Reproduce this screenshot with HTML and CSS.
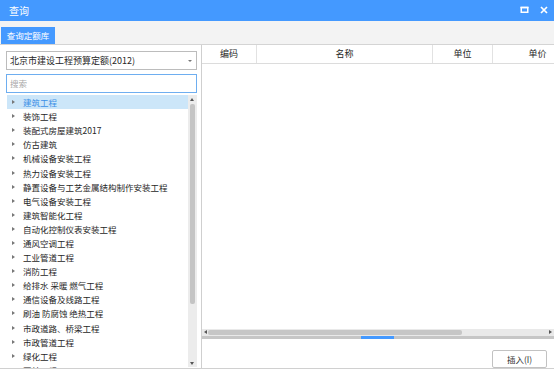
FILE: index.html
```html
<!DOCTYPE html>
<html lang="zh-CN">
<head>
    <meta charset="UTF-8">
    <title>查询</title>
    <link rel="stylesheet" href="styles.css">
</head>
<body>
    <div class="window">
        <div class="titlebar">
            <span class="title">查询</span>
            <span class="win-btns">
                <svg width="9" height="8" viewBox="0 0 9 8"><rect x="1.25" y="1.5" width="6.5" height="4.75" fill="none" stroke="#fff" stroke-width="1.5"/><rect x="0.5" y="0.75" width="8" height="1.5" fill="#fff"/></svg>
                <svg width="8" height="8" viewBox="0 0 8 8"><path d="M1 1 L7 7 M7 1 L1 7" stroke="#fff" stroke-width="1.7"/></svg>
            </span>
        </div>

        <div class="tabbar">
            <div class="tab">查询定额库</div>
        </div>

        <div class="main">
            <div class="left">
                <div class="combo">
                    <span>北京市建设工程预算定额(2012)</span>
                    <span class="combo-arrow"></span>
                </div>
                <div class="search">搜索</div>
                <div class="tree-wrap">
                    <ul class="tree">
                        <li class="selected"><i></i>建筑工程</li>
                        <li><i></i>装饰工程</li>
                        <li><i></i>装配式房屋建筑2017</li>
                        <li><i></i>仿古建筑</li>
                        <li><i></i>机械设备安装工程</li>
                        <li><i></i>热力设备安装工程</li>
                        <li><i></i>静置设备与工艺金属结构制作安装工程</li>
                        <li><i></i>电气设备安装工程</li>
                        <li><i></i>建筑智能化工程</li>
                        <li><i></i>自动化控制仪表安装工程</li>
                        <li><i></i>通风空调工程</li>
                        <li><i></i>工业管道工程</li>
                        <li><i></i>消防工程</li>
                        <li><i></i>给排水 采暖 燃气工程</li>
                        <li><i></i>通信设备及线路工程</li>
                        <li><i></i>刷油 防腐蚀 绝热工程</li>
                        <li><i></i>市政道路、桥梁工程</li>
                        <li><i></i>市政管道工程</li>
                        <li><i></i>绿化工程</li>
                        <li><i></i>园林工程</li>
                    </ul>
                    <div class="vscroll">
                        <span class="arr-up"></span>
                        <span class="vthumb"></span>
                        <span class="arr-down"></span>
                    </div>
                </div>
            </div>

            <div class="right">
                <div class="grid-head">
                    <div class="col c-code">编码</div>
                    <div class="col c-name">名称</div>
                    <div class="col c-unit">单位</div>
                    <div class="col c-price">单价</div>
                </div>
                <div class="grid-body"></div>
                <div class="hscroll">
                    <span class="arr-left"></span>
                    <span class="hthumb"></span>
                    <span class="arr-right"></span>
                </div>
                <div class="splitter"><span class="grip"></span></div>
                <div class="footer">
                    <button class="btn">插入(I)</button>
                </div>
            </div>
        </div>
    </div>
</body>
</html>
```

FILE: styles.css
```css
* {
    box-sizing: border-box;
}
body {
    margin: 0;
    background: #fff;
    font-family: "Noto Sans CJK SC", "Liberation Sans", sans-serif;
    font-size: 8.5px;
    color: #262626;
}
.window {
    width: 554px;
    display: flex;
    flex-direction: column;
}

/* title */
.titlebar {
    height: 21px;
    background: #4499ff;
    display: flex;
    align-items: center;
    justify-content: space-between;
    padding: 0 6px 0 9px;
}
.title {
    color: #fff;
    font-size: 10px;
    line-height: 12px;
}
.win-btns {
    display: flex;
    gap: 11px;
    align-items: center;
    margin-top: -2px;
}
.win-btns svg {
    display: block;
}

/* tabs */
.tabbar {
    height: 24px;
    background: #f3f3f3;
    border-bottom: 1px solid #d4d4d4;
    display: flex;
    align-items: flex-end;
    padding-left: 1px;
}
.tab {
    width: 54px;
    height: 17px;
    background: #4499ff;
    color: #fff;
    font-size: 8.5px;
    line-height: 17px;
    text-align: center;
}

/* main */
.main {
    height: 324px;
    display: flex;
    border-bottom: 1px solid #d0d0d0;
}
.left {
    width: 202px;
    border-right: 1px solid #cfcfcf;
    padding: 6px 4px 0 6px;
    display: flex;
    flex-direction: column;
}
.combo {
    height: 19px;
    border: 1px solid #bcbcbc;
    display: flex;
    align-items: center;
    justify-content: space-between;
    padding: 0 4px 0 3px;
    font-size: 9px;
    line-height: 12px;
}
.combo-arrow {
    width: 0;
    height: 0;
    border-top: 2.5px solid #777;
    border-left: 2px solid transparent;
    border-right: 2px solid transparent;
}
.search {
    margin-top: 4px;
    height: 19px;
    border: 1px solid #6eaef0;
    color: #a8a8a8;
    font-size: 8.5px;
    line-height: 17px;
    padding-left: 3px;
}
.tree-wrap {
    margin-top: 2px;
    flex: 1;
    display: flex;
    overflow: hidden;
}
.tree {
    list-style: none;
    margin: 0;
    padding: 0 0 0 1px;
    flex: 1;
    overflow: hidden;
}
.tree li {
    height: 14.1px;
    display: flex;
    align-items: center;
    padding-left: 5px;
    white-space: nowrap;
    line-height: 12px;
}
.tree li i {
    width: 0;
    height: 0;
    border-left: 3px solid #777;
    border-top: 2.5px solid transparent;
    border-bottom: 2.5px solid transparent;
    margin-right: 8px;
}
.tree li.selected {
    background: #cce6f9;
    color: #3b8fe6;
}
.vscroll {
    width: 9px;
    background: #ececec;
    position: relative;
    margin-bottom: 1px;
}
.vthumb {
    position: absolute;
    left: 2px;
    right: 2px;
    top: 9px;
    height: 200px;
    background: #c4c4c4;
    border-radius: 2px;
}
.arr-up, .arr-down {
    position: absolute;
    left: 2px;
    width: 0;
    height: 0;
    border-left: 2.5px solid transparent;
    border-right: 2.5px solid transparent;
}
.arr-up {
    top: 3px;
    border-bottom: 3px solid #555;
}
.arr-down {
    bottom: 2px;
    border-top: 3px solid #555;
}

/* grid */
.right {
    flex: 1;
    display: flex;
    flex-direction: column;
    min-width: 0;
    overflow: hidden;
}
.grid-head {
    height: 19px;
    border-bottom: 1px solid #dcdcdc;
    display: flex;
    flex-shrink: 0;
}
.col {
    border-right: 1px solid #e2e2e2;
    text-align: center;
    font-size: 9px;
    line-height: 17px;
    flex-shrink: 0;
}
.c-code {
    width: 55px;
}
.c-name {
    width: 176px;
}
.c-unit {
    width: 60px;
}
.c-price {
    width: 90px;
}
.grid-body {
    flex: 1;
}
.hscroll {
    height: 7px;
    background: #e9e9e9;
    position: relative;
    flex-shrink: 0;
}
.hthumb {
    position: absolute;
    left: 6px;
    top: 1px;
    width: 254px;
    height: 5px;
    background: #c6c6c6;
    border-radius: 2px;
}
.arr-left, .arr-right {
    position: absolute;
    top: 1px;
    width: 0;
    height: 0;
    border-top: 2.5px solid transparent;
    border-bottom: 2.5px solid transparent;
}
.arr-left {
    left: 2px;
    border-right: 3px solid #555;
}
.arr-right {
    right: 2px;
    border-left: 3px solid #555;
}
.splitter {
    height: 3px;
    background: #c6c6c6;
    position: relative;
    flex-shrink: 0;
}
.grip {
    position: absolute;
    left: 159px;
    top: 0;
    width: 33px;
    height: 3px;
    background: #4499ff;
}
.footer {
    height: 29px;
    flex-shrink: 0;
    display: flex;
    justify-content: flex-end;
    align-items: flex-start;
    padding: 11px 7px 0 0;
}
.btn {
    width: 55px;
    height: 18px;
    border: 1px solid #c2c2c2;
    border-radius: 2px;
    background: #fff;
    font-family: inherit;
    font-size: 8.5px;
    color: #333;
    padding: 0;
    line-height: 16px;
}
```
